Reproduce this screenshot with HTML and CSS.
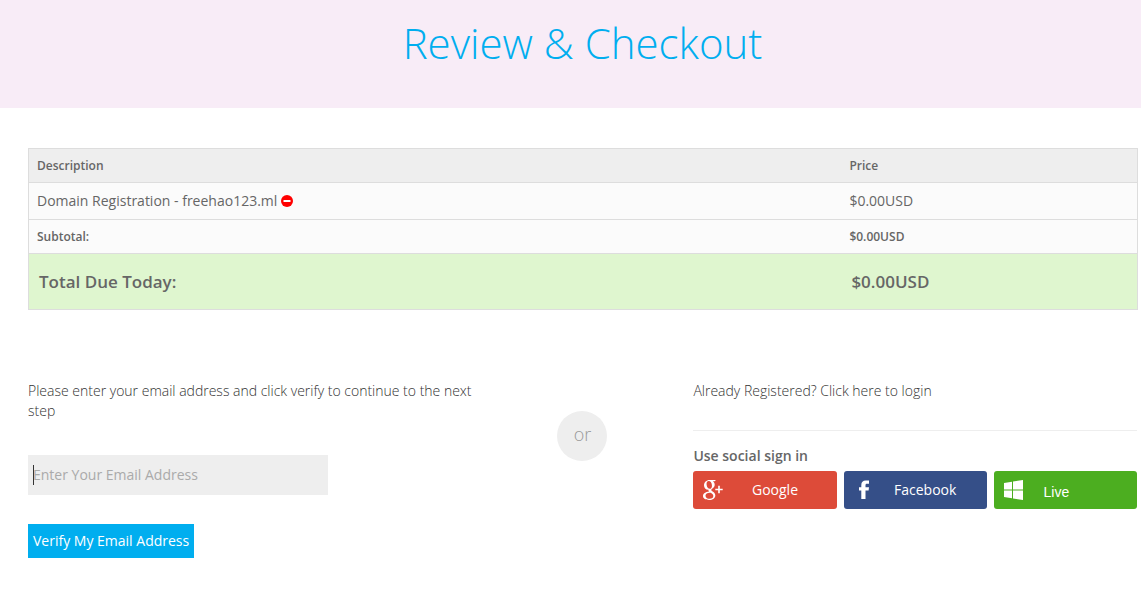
FILE: index.html
```html
<!DOCTYPE html>
<html lang="en">
<head>
<meta charset="utf-8">
<title>Review &amp; Checkout</title>
<link rel="stylesheet" href="styles.css">
</head>
<body>
<header class="banner"><h1 class="banner-title">Review &amp; Checkout</h1></header>
<main class="content">
  <table class="cart">
    <thead>
      <tr class="cart-head"><th class="cart-desc" scope="col">Description</th><th scope="col">Price</th></tr>
    </thead>
    <tbody>
      <tr class="cart-item">
        <td>Domain Registration - freehao123.ml
          <button class="remove" type="button" aria-label="Remove"><svg class="remove-icon" viewBox="0 0 12 12"><circle cx="6" cy="6" r="6" fill="#f00"/><path d="M2.500 5h7v2h-7z" fill="#fff"/></svg></button></td>
        <td>$0.00USD</td>
      </tr>
      <tr class="cart-subtotal"><td>Subtotal:</td><td>$0.00USD</td></tr>
      <tr class="cart-total"><td>Total Due Today:</td><td>$0.00USD</td></tr>
    </tbody>
  </table>
  <div class="account">
    <form class="verify">
      <label class="lead" for="email">Please enter your email address and click verify to continue to the next step</label>
      <div class="field"><input class="email" id="email" type="email" placeholder="Enter Your Email Address"></div>
      <button class="verify-button" type="button">Verify My Email Address</button>
    </form>
    <div class="divider"><span class="or">or</span></div>
    <section class="login">
      <a class="lead login-link" href="#">Already Registered? Click here to login</a>
      <h2 class="social-title">Use social sign in</h2>
      <div class="social">
        <button class="social-button google" type="button">
          <svg class="social-icon" viewBox="0 0 20 20" fill="#fff"><path fill-rule="evenodd" d="M6.500 0H13l-1.400 1.200H9.800c1.300.9 1.900 2.100 1.900 3.600 0 1.500-.7 2.500-1.900 3.400-1.200.9-1.500 1.300-1.500 1.800 0 .6.600 1 1.700 1.800 1.600 1.100 2.300 2.200 2.300 3.700 0 2.500-2.400 4.500-6.200 4.500C2.500 20 0 18.600 0 16.100c0-2.600 2.600-4.200 6-4.300-.5-.6-.7-1.200-.4-2-2.800.2-4.600-1.900-4.600-4.500C1 2.300 3.500 0 6.500 0zM5.700 1C4.200 1 3.300 2.400 3.600 4.700c.3 2.400 1.600 4.100 3.200 4.100 1.600 0 2.400-1.500 2.100-3.900C8.600 2.600 7.300 1 5.700 1zM6.800 12.700c-2.500 0-4.300 1.200-4.300 3 0 1.900 1.700 3.100 4.200 3.100 2.400 0 3.600-1.100 3.600-2.800 0-1.300-.9-2-2.600-3.200z"/><path d="M15.200 5.800h1.600v2.900h2.900v1.600h-2.900v2.900h-1.600v-2.900h-2.900V8.700h2.900z"/></svg>
          <span class="social-name">Google</span>
        </button>
        <button class="social-button facebook" type="button">
          <svg class="social-icon" viewBox="0 0 20 20" fill="#fff"><path d="M7.300 19v-8.500H5V7.300h2.300V5c0-3 1.600-4.500 4.500-4.500h3.200v3.300h-2c-1.200 0-1.500.5-1.500 1.500v2H15l-.4 3.200h-3.100V19z"/></svg>
          <span class="social-name">Facebook</span>
        </button>
        <button class="social-button live" type="button">
          <svg class="social-icon" viewBox="0 0 20 20" fill="#fff"><path d="M0 3l8-1.200V9.500H0zM9 1.600L19 0v9.500H9zM0 10.500h8v7.700L0 17zM9 10.500h10V20L9 18.400z"/></svg>
          <span class="social-name">Live</span>
        </button>
      </div>
    </section>
  </div>
</main>
</body>
</html>
```
FILE: styles.css
```css
* { box-sizing: border-box; }
body {
  margin: 0;
  background: #fff;
  color: #666;
  font: 14px/20px "Open Sans", sans-serif;
}
button, input { font: inherit; border: 0; }
.banner {
  padding: 13px 4px 35px 28px;
  background: #f8ecf7;
  text-align: center;
}
.banner-title {
  margin: 0;
  color: #00aeef;
  font-size: 42px;
  font-weight: 300;
  line-height: 60px;
}
.content { padding: 40px 3px 36px 28px; }
.cart {
  width: 100%;
  border-collapse: collapse;
  border: 1px solid #ddd;
  background: #fbfbfb;
  text-align: left;
}
.cart th, .cart td { padding: 8px; }
.cart tr { border-top: 1px solid #ddd; }
.cart-desc { width: 73.3%; }
.cart-head { background: #eee; }
.cart-head, .cart-subtotal { font-size: 12px; line-height: 17px; }
.cart-head th, .cart-subtotal { font-weight: 600; }
.cart .cart-total { background: #dff6cf; font-size: 17px; font-weight: 600; }
.cart .cart-total td { padding: 18px 10px; line-height: 19px; }
.remove {
  padding: 0 0 2px;
  background: none;
  line-height: 12px;
  vertical-align: middle;
}
.remove-icon { display: block; width: 12px; height: 12px; }
.account {
  display: grid;
  grid-template-columns: 2fr 1fr 2fr;
  padding: 71px 1px 0 0;
}
.verify { display: flex; flex-direction: column; align-items: flex-start; }
.lead { font-weight: 300; color: #333; }
.field { position: relative; width: 300px; max-width: 100%; margin: 34px 0 29px; }
.field::before {
  content: "";
  position: absolute;
  top: 10px;
  left: 5px;
  width: 1px;
  height: 20px;
  background: #333;
}
.email {
  display: block;
  width: 100%;
  height: 40px;
  padding: 0 5px 2px;
  border-radius: 0;
  background: #eee;
  color: #666;
}
.email::placeholder { color: #aaa; opacity: 1; }
.verify-button { padding: 7px 5px; background: #00aeef; color: #fff; }
.divider { display: flex; justify-content: center; padding-top: 30px; }
.or {
  width: 50px;
  height: 50px;
  border-radius: 50%;
  background: #eee;
  color: #999;
  font-size: 18px;
  font-weight: 300;
  line-height: 46px;
  text-align: center;
}
.login-link { display: block; text-decoration: none; }
.social-title {
  margin: 29px 0 5px;
  padding-top: 15px;
  border-top: 1px solid #eee;
  font-size: 14px;
  font-weight: 600;
  line-height: 20px;
}
.social { display: grid; grid-template-columns: repeat(3, 1fr); gap: 7px; }
.social-button {
  display: grid;
  grid-template-columns: 20px 1fr;
  align-items: center;
  height: 38px;
  padding: 0 10px;
  border-radius: 3px;
  color: #fff;
}
.social-icon { width: 20px; height: 20px; }
.google { background: #dd4b39; }
.facebook { background: #354f88; }
.live { background: #4cae20; font-family: "Liberation Sans", Arial, sans-serif; }
.live .social-name { padding: 4px 38px 0 0; }
```
